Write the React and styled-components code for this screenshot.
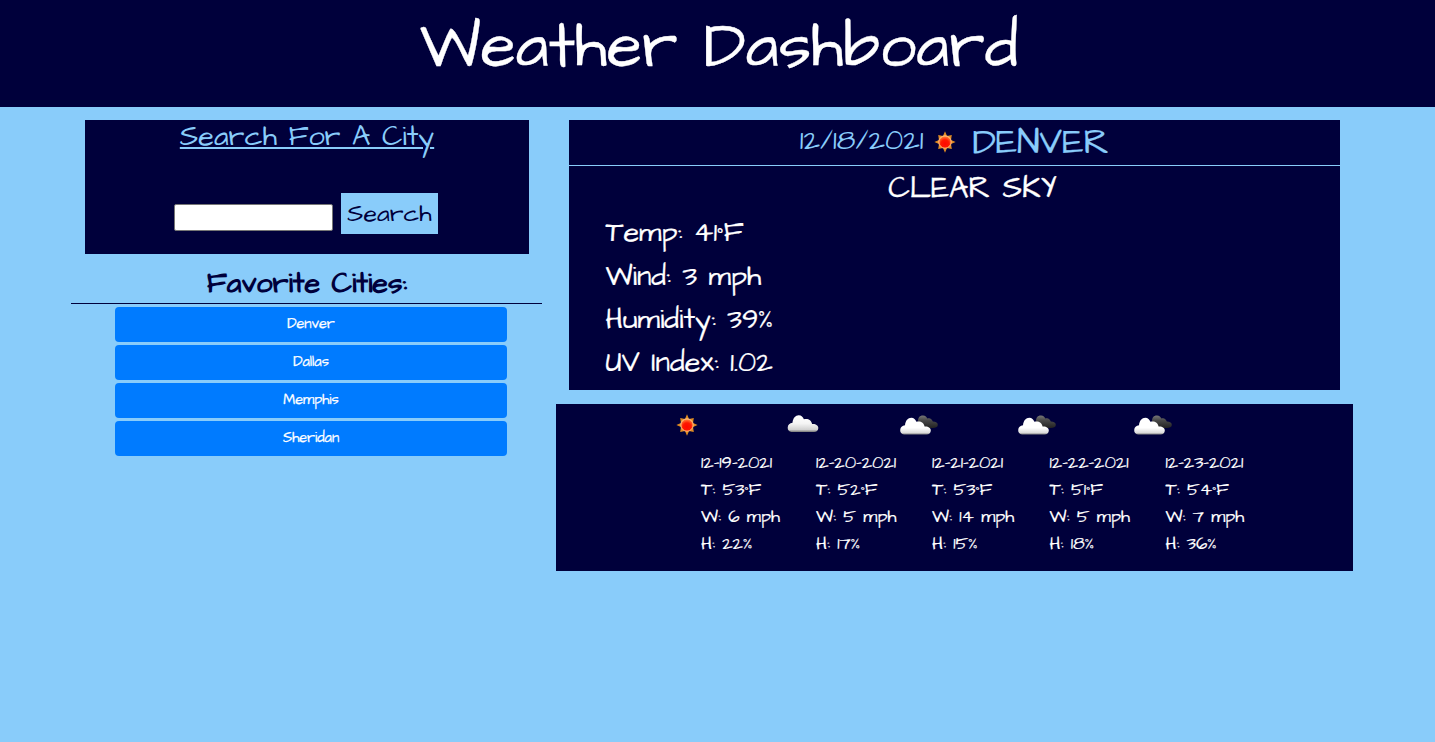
import React from "react";
import styled, { createGlobalStyle } from "styled-components";

const navy = "#00003b";
const sky = "#89ccfa";
const hand = '"Architects Daughter", Lato, sans-serif';

const GlobalStyle = createGlobalStyle`
  * { box-sizing: border-box; }
  body {
    margin: 0;
    min-height: 742px;
    background: ${sky};
    color: #fff;
    font-family: ${hand};
  }
  h1, h2, h3, p { margin: 0; padding: 0; font-weight: 400; }
`;

const Header = styled.header`
  height: 107px;
  background: ${navy};
  text-align: center;
`;
const Title = styled.h1`
  padding: 3px 0 0 3px;
  font-size: 64.8px;
  line-height: 88px;
  -webkit-text-stroke: 0.3px #fff;
`;
const Main = styled.main`
  display: flex;
  gap: 14px;
  padding: 13px 0 0 71px;
`;
const Sidebar = styled.aside`
  width: 471px;
`;
const SearchPanel = styled.section`
  width: 444px;
  height: 134px;
  margin-left: 14px;
  background: ${navy};
  text-align: center;
`;
const SearchTitle = styled.h2`
  font-size: 28.8px;
  line-height: 35px;
  color: ${sky};
  text-decoration: underline;
  text-decoration-thickness: 2px;
  text-underline-offset: 2px;
`;
const SearchForm = styled.form`
  display: flex;
  justify-content: center;
  gap: 8px;
  padding: 38px 2px 0 0;
`;
const CityInput = styled.input`
  width: 159px;
  height: 27px;
  margin: 11px 0 0;
  border: 1px solid #767676;
  border-radius: 2px;
  background: #fff;
`;
const SearchButton = styled.button`
  width: 97px;
  height: 41px;
  padding: 0 0 1px;
  border: 0;
  background: ${sky};
  color: ${navy};
  font: 400 25px ${hand};
`;
const FavoritesTitle = styled.h3`
  height: 50px;
  padding-top: 14px;
  padding-left: 1px;
  border-bottom: 1px solid ${navy};
  color: ${navy};
  font-size: 28.8px;
  font-weight: 700;
  line-height: 32px;
  text-align: center;
`;
const CityList = styled.div`
  display: flex;
  flex-direction: column;
  gap: 3px;
  padding: 3px 35px 0 44px;
`;
const CityButton = styled.button`
  height: 35px;
  padding: 0 0 1px;
  border: 0;
  border-radius: 4px;
  background: #007bff;
  color: #fff;
  font: 400 14.4px ${hand};
  -webkit-text-stroke: 0.25px #fff;
`;
const Content = styled.div`
  width: 797px;
`;
const Today = styled.section`
  height: 270px;
  margin: 0 13px 14px;
  background: ${navy};
`;
const TodayHeader = styled.div`
  display: flex;
  justify-content: center;
  align-items: center;
  height: 46px;
  padding-bottom: 4px;
  border-bottom: 1px solid ${sky};
  color: ${sky};
`;
const TodayDate = styled.span`
  font-size: 28.8px;
`;
const TodayIcon = styled.span`
  display: flex;
  margin: 2px 16px 0 11px;
`;
const TodayCity = styled.h2`
  padding-top: 4px;
  font-size: 36px;
  -webkit-text-stroke: 0.2px ${sky};
`;
const Conditions = styled.div`
  height: 46px;
  padding: 2px 0 0 36px;
  font-size: 30.5px;
  line-height: 40px;
  text-align: center;
  -webkit-text-stroke: 0.3px #fff;
`;
const Readings = styled.div`
  display: grid;
  grid-template-rows: 44px 43px 43px 43px;
`;
const Reading = styled.p`
  padding-left: 36.5px;
  font-size: 28.8px;
  line-height: 43px;
  -webkit-text-stroke: 0.2px #fff;
`;
const Forecast = styled.section`
  display: grid;
  grid-template-columns: 115px 116px 117.5px 116px 120px;
  height: 167px;
  padding-left: 107px;
  background: ${navy};
`;
const DayIcon = styled.div`
  display: flex;
  align-items: center;
  justify-content: center;
  width: ${(p) => (p.$wide ? 50 : 48)}px;
  height: 45px;
  padding-bottom: 3px;
`;
const DayLine = styled.p`
  padding-left: 38px;
  font-size: 18.1px;
  line-height: 27px;
  white-space: nowrap;
  -webkit-text-stroke: 0.15px #fff;
`;

const Sun = () => (
  <svg width="22" height="22" viewBox="0 0 22 22">
    <defs>
      <radialGradient id="sunCore" cx="0.5" cy="0.65" r="0.65">
        <stop offset="0" stopColor="#ff0800" />
        <stop offset="0.5" stopColor="#ff1800" />
        <stop offset="0.85" stopColor="#ff7030" />
        <stop offset="1" stopColor="#ffb060" />
      </radialGradient>
    </defs>
    <path
      d="M11 0.3 13 5 17.8 4 17 8.9 21.6 11 17 13.1 17.8 18 13 17 11 21.7 9 17 4.2 18 5 13.1 0.4 11 5 8.9 4.2 4 9 5Z"
      fill="#e08c22"
    />
    <circle cx="11" cy="11" r="6.2" fill="url(#sunCore)" stroke="#ffc488" strokeWidth="0.9" />
  </svg>
);

const Cloud = ({ broken }) => (
  <svg width="38" height="22" viewBox="0 0 38 22">
    <defs>
      <linearGradient id="cloudLight" x1="0" y1="0" x2="0" y2="1">
        <stop offset="0" stopColor="#fff" />
        <stop offset="0.5" stopColor="#f4f4f4" />
        <stop offset="0.85" stopColor="#d2d2d2" />
        <stop offset="1" stopColor="#777" />
      </linearGradient>
      <linearGradient id="cloudWhite" x1="0" y1="0" x2="0" y2="1">
        <stop offset="0.6" stopColor="#fff" />
        <stop offset="0.88" stopColor="#ddd" />
        <stop offset="1" stopColor="#888" />
      </linearGradient>
      <linearGradient id="cloudDark" x1="0" y1="0" x2="0" y2="1">
        <stop offset="0" stopColor="#777" />
        <stop offset="0.4" stopColor="#484848" />
        <stop offset="1" stopColor="#222" />
      </linearGradient>
    </defs>
    {broken && (
      <path
        d="M18 7C18 3.5 20 1.3 23 1.5 25.5 1.7 26.6 3.2 27.4 4.4 30 3.5 32 5 32.8 7.6 36 7.6 38 9 37.8 11 37.6 13.3 35.5 14 33 14H18Z"
        fill="url(#cloudDark)"
      />
    )}
    <path
      transform={broken ? "translate(0 3.5)" : "translate(3.5 1)"}
      d="M4 17C1.5 16.6 0 14.8 .2 12.4 .4 9.8 2.2 8.1 5 7.8 5.4 3.2 8 .3 11.2 .3 14 .3 15.5 2 16.4 4.3 20 3 24 5 24.6 9 28 8.6 31 10.5 30.8 13.2 30.7 15.6 29 17 26.5 17Z"
      fill={broken ? "url(#cloudWhite)" : "url(#cloudLight)"}
    />
  </svg>
);

const cities = ["Denver", "Dallas", "Memphis", "Sheridan"];
const readings = ["Temp: 41°F", "Wind: 3 mph", "Humidity: 39%", "UV Index: 1.02"];
const days = [
  { icon: "sun", lines: ["12-19-2021", "T: 53°F", "W: 6 mph", "H: 22%"] },
  { icon: "cloud", lines: ["12-20-2021", "T: 52°F", "W: 5 mph", "H: 17%"] },
  { icon: "broken", lines: ["12-21-2021", "T: 53°F", "W: 14 mph", "H: 15%"] },
  { icon: "broken", lines: ["12-22-2021", "T: 51°F", "W: 5 mph", "H: 18%"] },
  { icon: "broken", lines: ["12-23-2021", "T: 54°F", "W: 7 mph", "H: 36%"] },
];

export default function App() {
  return (
    <>
      <GlobalStyle />
      <Header>
        <Title>Weather Dashboard</Title>
      </Header>
      <Main>
        <Sidebar>
          <SearchPanel>
            <SearchTitle>Search For A City</SearchTitle>
            <SearchForm onSubmit={(e) => e.preventDefault()}>
              <CityInput type="text" aria-label="City" />
              <SearchButton>Search</SearchButton>
            </SearchForm>
          </SearchPanel>
          <FavoritesTitle>Favorite Cities:</FavoritesTitle>
          <CityList>
            {cities.map((name) => (
              <CityButton key={name}>{name}</CityButton>
            ))}
          </CityList>
        </Sidebar>
        <Content>
          <Today>
            <TodayHeader>
              <TodayDate>12/18/2021</TodayDate>
              <TodayIcon><Sun /></TodayIcon>
              <TodayCity>DENVER</TodayCity>
            </TodayHeader>
            <Conditions>CLEAR SKY</Conditions>
            <Readings>
              {readings.map((t) => (
                <Reading key={t}>{t}</Reading>
              ))}
            </Readings>
          </Today>
          <Forecast>
            {days.map((d) => (
              <div key={d.lines[0]}>
                <DayIcon $wide={d.icon !== "sun"}>
                  {d.icon === "sun" ? <Sun /> : <Cloud broken={d.icon === "broken"} />}
                </DayIcon>
                {d.lines.map((t) => (
                  <DayLine key={t}>{t}</DayLine>
                ))}
              </div>
            ))}
          </Forecast>
        </Content>
      </Main>
    </>
  );
}
